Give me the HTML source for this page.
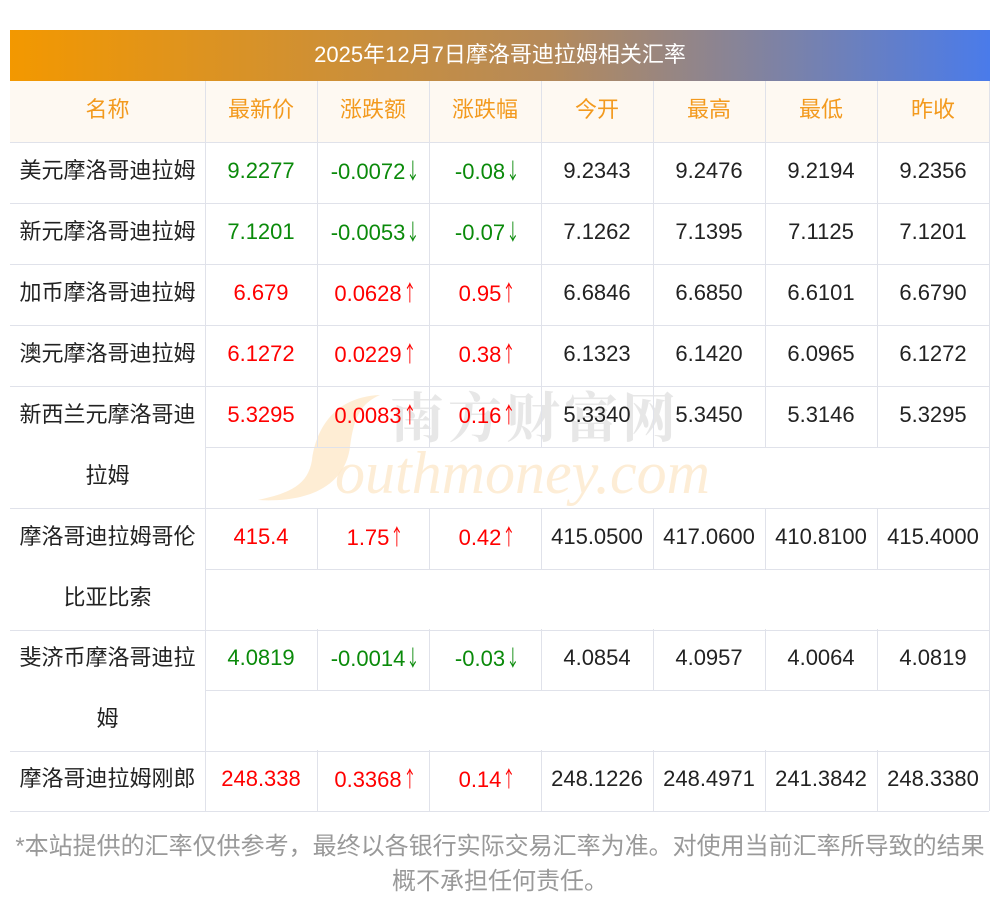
<!DOCTYPE html><html><head><meta charset="utf-8"><style>
body{margin:0;width:1000px;height:913px;background:#fff;position:relative;overflow:hidden;font-family:"Liberation Sans","Noto Sans CJK SC",sans-serif;}
.t{position:absolute;left:10px;top:30px;width:980px;height:51px;background:linear-gradient(90deg,#f39800,#b58a5a 55%,#4a7bea);color:#fff;font-size:22px;line-height:49px;text-align:center}
.hd{position:absolute;left:10px;top:81px;width:979px;height:61px;background:#fef9f2}
.c{position:absolute;height:61px;line-height:57px;text-align:center;font-size:22px;color:#222;white-space:nowrap}
.h{color:#f39a1e}
.g{color:#0a8a0a}.r{color:#f00}
.a{font-family:"Noto Sans CJK SC",sans-serif;display:inline-block;width:11px;transform:scaleX(0.6);text-align:center;margin-left:-1px}
.hl{position:absolute;height:1px;background:#e0e2ea}
.vl{position:absolute;width:1px;background:#e0e2ea}
.n{position:absolute;left:10px;width:195px;font-size:22px;line-height:61px;text-align:center;color:#222;margin-top:-2px}
.wm{position:absolute;pointer-events:none}
.f{position:absolute;left:0;width:1000px;text-align:center;color:#999;font-size:24px;line-height:35px;top:829px}
</style></head><body>
<div class="t">2025年12月7日摩洛哥迪拉姆相关汇率</div>
<div class="hd"></div>
<svg class="wm" style="left:250px;top:385px" width="520" height="130">
<path d="M130 10 C80 12 65 50 62 75 C58 100 40 108 8 115 C60 118 95 100 100 62 C104 30 112 18 130 10Z" fill="#fde6c2" opacity="0.7"/>
<text x="140" y="52" font-size="54" fill="#d8d8d8" opacity="0.6" font-family="Noto Serif CJK SC,serif" font-weight="bold" letter-spacing="4">南方财富网</text>
<text x="85" y="108" font-size="60" fill="#fde9cc" opacity="0.8" font-style="italic" font-family="Liberation Serif,serif">outhmoney.com</text>
</svg>
<div id="g"></div>
<div class="f">*本站提供的汇率仅供参考，最终以各银行实际交易汇率为准。对使用当前汇率所导致的结果<br>概不承担任何责任。</div>
<script>
var xs=[10,205,317,429,541,653,765,877,989];
var H=['名称','最新价','涨跌额','涨跌幅','今开','最高','最低','昨收'];
var rows=[
[142,1,['美元摩洛哥迪拉姆'],'g',['9.2277','-0.0072↓','-0.08↓','9.2343','9.2476','9.2194','9.2356']],
[203,1,['新元摩洛哥迪拉姆'],'g',['7.1201','-0.0053↓','-0.07↓','7.1262','7.1395','7.1125','7.1201']],
[264,1,['加币摩洛哥迪拉姆'],'r',['6.679','0.0628↑','0.95↑','6.6846','6.6850','6.6101','6.6790']],
[325,1,['澳元摩洛哥迪拉姆'],'r',['6.1272','0.0229↑','0.38↑','6.1323','6.1420','6.0965','6.1272']],
[386,2,['新西兰元摩洛哥迪','拉姆'],'r',['5.3295','0.0083↑','0.16↑','5.3340','5.3450','5.3146','5.3295']],
[508,2,['摩洛哥迪拉姆哥伦','比亚比索'],'r',['415.4','1.75↑','0.42↑','415.0500','417.0600','410.8100','415.4000']],
[629,2,['斐济币摩洛哥迪拉','姆'],'g',['4.0819','-0.0014↓','-0.03↓','4.0854','4.0957','4.0064','4.0819']],
[750,1,['摩洛哥迪拉姆刚郎'],'r',['248.338','0.3368↑','0.14↑','248.1226','248.4971','241.3842','248.3380']]];
var s='';
for(var i=0;i<8;i++){s+='<div class="c h" style="left:'+xs[i]+'px;top:81px;width:'+(xs[i+1]-xs[i])+'px">'+H[i]+'</div>';}
for(var i=1;i<8;i++)s+='<div class="vl" style="left:'+xs[i]+'px;top:81px;height:61px"></div>';
s+='<div class="hl" style="left:10px;top:142px;width:979px"></div>';
rows.forEach(function(r){var y=r[0],k=r[1];
s+='<div class="n" style="top:'+y+'px">'+r[2].join('<br>')+'</div>';
for(var i=1;i<8;i++){var v=r[4][i-1].replace(/([↑↓])/,'<span class="a">$1</span>');
s+='<div class="c '+(i<4?r[3]:'')+'" style="left:'+xs[i]+'px;top:'+y+'px;width:'+(xs[i+1]-xs[i])+'px">'+v+'</div>';
s+='<div class="vl" style="left:'+xs[i]+'px;top:'+y+'px;height:61px"></div>';}
if(k==2){s+='<div class="vl" style="left:205px;top:'+(y+61)+'px;height:61px"></div>';
s+='<div class="hl" style="left:205px;top:'+(y+61)+'px;width:784px"></div>';}
var b=y+61*k;s+='<div class="hl" style="left:10px;top:'+b+'px;width:979px"></div>';
s+='<div class="vl" style="left:989px;top:'+y+'px;height:'+(61*k)+'px"></div>';});
s+='<div class="vl" style="left:989px;top:81px;height:61px"></div>';
document.getElementById('g').innerHTML=s;
</script>
</body></html>
